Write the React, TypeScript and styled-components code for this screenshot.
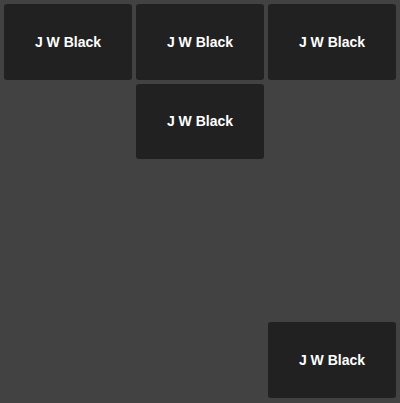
import styled, { createGlobalStyle } from 'styled-components';

const GlobalStyle = createGlobalStyle({
  'html, body': {
    margin: 0,
    padding: 0,
    background: '#424242',
  },
  body: {
    fontFamily: '"Liberation Sans", Arial, sans-serif',
  },
});

const Board = styled.div({
  width: '400px',
  height: '403px',
  boxSizing: 'border-box',
  padding: '4px',
  background: '#424242',
  display: 'grid',
  gridTemplateColumns: 'repeat(3, 128px)',
  gridTemplateRows: 'repeat(5, 75.5px)',
  gap: '4px',
});

const Tile = styled.div<{ $col: number; $row: number }>`
  grid-column: ${(p) => p.$col};
  grid-row: ${(p) => p.$row};
  display: flex;
  align-items: center;
  justify-content: center;
  background: #212121;
  border-radius: 3px;
  color: #ffffff;
  font-size: 14px;
  font-weight: bold;
`;

const tiles = [
  { col: 1, row: 1 },
  { col: 2, row: 1 },
  { col: 3, row: 1 },
  { col: 2, row: 2 },
  { col: 3, row: 5 },
];

export default function App() {
  return (
    <>
      <GlobalStyle />
      <Board>
        {tiles.map((t, i) => (
          <Tile key={i} $col={t.col} $row={t.row}>
            J W Black
          </Tile>
        ))}
      </Board>
    </>
  );
}
